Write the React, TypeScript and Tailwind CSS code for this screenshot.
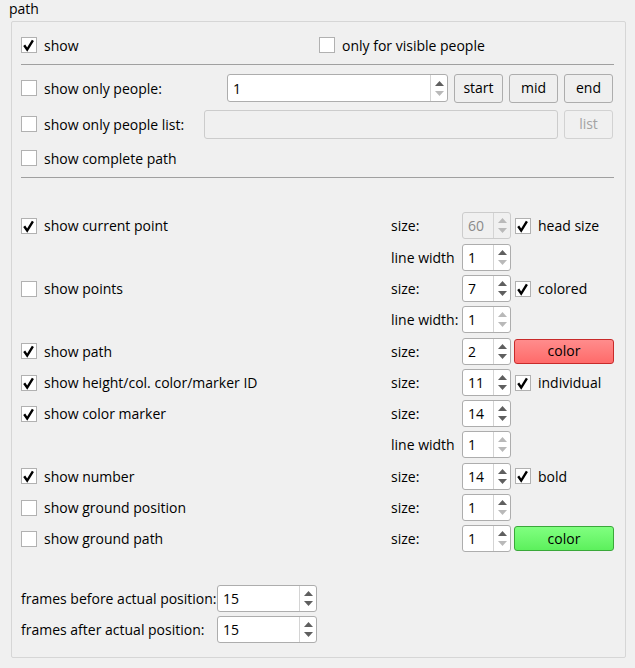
import React from 'react';

const Check = ({ checked }: { checked?: boolean }) => (
  <span className="w-4 h-4 shrink-0 border border-[#b1b1b1] bg-white flex items-center justify-center">
    {checked && (
      <svg width="14" height="14" viewBox="0 0 14 14">
        <path d="M2.2 7.2 L5.2 11.6 L10.9 2.4" stroke="#000" strokeWidth="2.4" fill="none" />
      </svg>
    )}
  </span>
);

const CheckLabel = ({ checked, label }: { checked?: boolean; label: string }) => (
  <div className="flex items-center gap-[7px]">
    <Check checked={checked} />
    <span className="whitespace-nowrap pt-px">{label}</span>
  </div>
);

const Arrows = ({ up = true, down = true }: { up?: boolean; down?: boolean }) => (
  <div className="w-[17px] h-full border-l border-[#d4d4d4] flex flex-col items-center justify-center gap-[5px]">
    <svg width="9" height="5" viewBox="0 0 9 5">
      <path d="M0 5 L4.5 0 L9 5 Z" fill={up ? '#5f5f5f' : '#b9b9b9'} />
    </svg>
    <svg width="9" height="5" viewBox="0 0 9 5">
      <path d="M0 0 L4.5 5 L9 0 Z" fill={down ? '#5f5f5f' : '#b9b9b9'} />
    </svg>
  </div>
);

const Spin = ({
  value,
  disabled,
  up = true,
  down = true,
  className = 'w-[49px] h-[27px]',
}: {
  value: string;
  disabled?: boolean;
  up?: boolean;
  down?: boolean;
  className?: string;
}) => (
  <div
    className={`${className} flex rounded-[3px] border ${
      disabled ? 'border-[#cccccc] bg-[#f0f0f0] text-[#8a8a8a]' : 'border-[#adadad] bg-white text-black'
    }`}
  >
    <div className="flex-1 pl-[5px] pt-px flex items-center">{value}</div>
    {disabled ? <Arrows up={false} down={false} /> : <Arrows up={up} down={down} />}
  </div>
);

const Btn = ({ label, disabled }: { label: string; disabled?: boolean }) => (
  <div
    className={`w-[49px] h-[29px] rounded-[3px] border flex items-center justify-center ${
      disabled ? 'border-[#d2d2d2] bg-[#f0f0f0] text-[#a3a3a3]' : 'border-[#adadad] bg-[#efefef] text-black'
    }`}
  >
    {label}
  </div>
);

type Row = {
  left?: { label: string; checked?: boolean };
  label: string;
  spin: { value: string; disabled?: boolean; up?: boolean; down?: boolean };
  extra?: { kind: 'check'; label: string } | { kind: 'color'; tone: 'red' | 'green' };
  h: string;
};

const rows: Row[] = [
  { left: { label: 'show current point', checked: true }, label: 'size:', spin: { value: '60', disabled: true }, extra: { kind: 'check', label: 'head size' }, h: 'h-[31px]' },
  { label: 'line width', spin: { value: '1', down: false }, h: 'h-[32px]' },
  { left: { label: 'show points' }, label: 'size:', spin: { value: '7' }, extra: { kind: 'check', label: 'colored' }, h: 'h-[31px]' },
  { label: 'line width:', spin: { value: '1', up: false, down: false }, h: 'h-[31px]' },
  { left: { label: 'show path', checked: true }, label: 'size:', spin: { value: '2' }, extra: { kind: 'color', tone: 'red' }, h: 'h-[32px]' },
  { left: { label: 'show height/col. color/marker ID', checked: true }, label: 'size:', spin: { value: '11' }, extra: { kind: 'check', label: 'individual' }, h: 'h-[31px]' },
  { left: { label: 'show color marker', checked: true }, label: 'size:', spin: { value: '14' }, h: 'h-[31px]' },
  { label: 'line width', spin: { value: '1', up: false, down: false }, h: 'h-[31px]' },
  { left: { label: 'show number', checked: true }, label: 'size:', spin: { value: '14' }, extra: { kind: 'check', label: 'bold' }, h: 'h-[32px]' },
  { left: { label: 'show ground position' }, label: 'size:', spin: { value: '1', down: false }, h: 'h-[31px]' },
  { left: { label: 'show ground path' }, label: 'size:', spin: { value: '1', down: false }, extra: { kind: 'color', tone: 'green' }, h: 'h-[31px]' },
];

export default function App() {
  return (
    <div
      className="w-[635px] h-[668px] bg-[#f0f0f0] text-black text-[14px] leading-none overflow-hidden"
      style={{ fontFamily: '"Segoe UI", "Open Sans", sans-serif' }}
    >
      <div className="h-[21px] pl-[9px] pt-[1px] leading-[16px]">path</div>

      <div className="ml-[11px] w-[615px] h-[637px] border border-[#d6d6d6] rounded-[2px] pl-[9px] pr-[11px] flex flex-col">
        {/* show / visible people */}
        <div className="mt-[7px] h-[32px] flex items-center">
          <div className="w-[298px]">
            <CheckLabel checked label="show" />
          </div>
          <CheckLabel label="only for visible people" />
        </div>
        <div className="mt-[3px] border-t border-[#a0a0a0]" />

        {/* only people */}
        <div className="mt-[8px] h-[30px] flex items-center">
          <div className="w-[206px]">
            <CheckLabel label="show only people:" />
          </div>
          <Spin value="1" down={false} className="w-[221px] h-[28px]" />
          <div className="ml-[6px] flex gap-[6px]">
            <Btn label="start" />
            <Btn label="mid" />
            <Btn label="end" />
          </div>
        </div>
        <div className="mt-[6px] h-[30px] flex items-center">
          <div className="w-[183px]">
            <CheckLabel label="show only people list:" />
          </div>
          <div className="w-[354px] h-[29px] rounded-[3px] border border-[#cccccc] bg-[#f0f0f0]" />
          <div className="ml-[6px]">
            <Btn label="list" disabled />
          </div>
        </div>
        <div className="mt-[4px] h-[30px] flex items-center">
          <CheckLabel label="show complete path" />
        </div>
        <div className="mt-[4px] border-t border-[#a0a0a0]" />

        {/* detail grid */}
        <div className="mt-[32px] flex flex-col">
          {rows.map((r, i) => (
            <div key={i} className={`${r.h} grid grid-cols-[370px_71px_49px_1fr] items-center`}>
              <div>{r.left && <CheckLabel checked={r.left.checked} label={r.left.label} />}</div>
              <div className="whitespace-nowrap pt-px">{r.label}</div>
              <Spin {...r.spin} />
              <div className="pl-[3px]">
                {r.extra?.kind === 'check' && (
                  <div className="pl-px">
                    <CheckLabel checked label={r.extra.label} />
                  </div>
                )}
                {r.extra?.kind === 'color' && (
                  <div
                    className={`h-[25px] rounded-[3px] border flex items-center justify-center ${
                      r.extra.tone === 'red'
                        ? 'border-[#c82a2a] bg-gradient-to-b from-[#ff8c8c] to-[#ff6a6a]'
                        : 'border-[#3aa83a] bg-gradient-to-b from-[#80ff80] to-[#5cf05c]'
                    }`}
                  >
                    color
                  </div>
                )}
              </div>
            </div>
          ))}
        </div>

        {/* frames */}
        <div className="mt-[29px] h-[30px] flex items-center">
          <div className="w-[196px] whitespace-nowrap pt-px">frames before actual position:</div>
          <Spin value="15" className="w-[100px] h-[27px]" />
        </div>
        <div className="mt-[1px] h-[30px] flex items-center">
          <div className="w-[196px] whitespace-nowrap pt-px">frames after actual position:</div>
          <Spin value="15" className="w-[100px] h-[27px]" />
        </div>
      </div>
    </div>
  );
}
